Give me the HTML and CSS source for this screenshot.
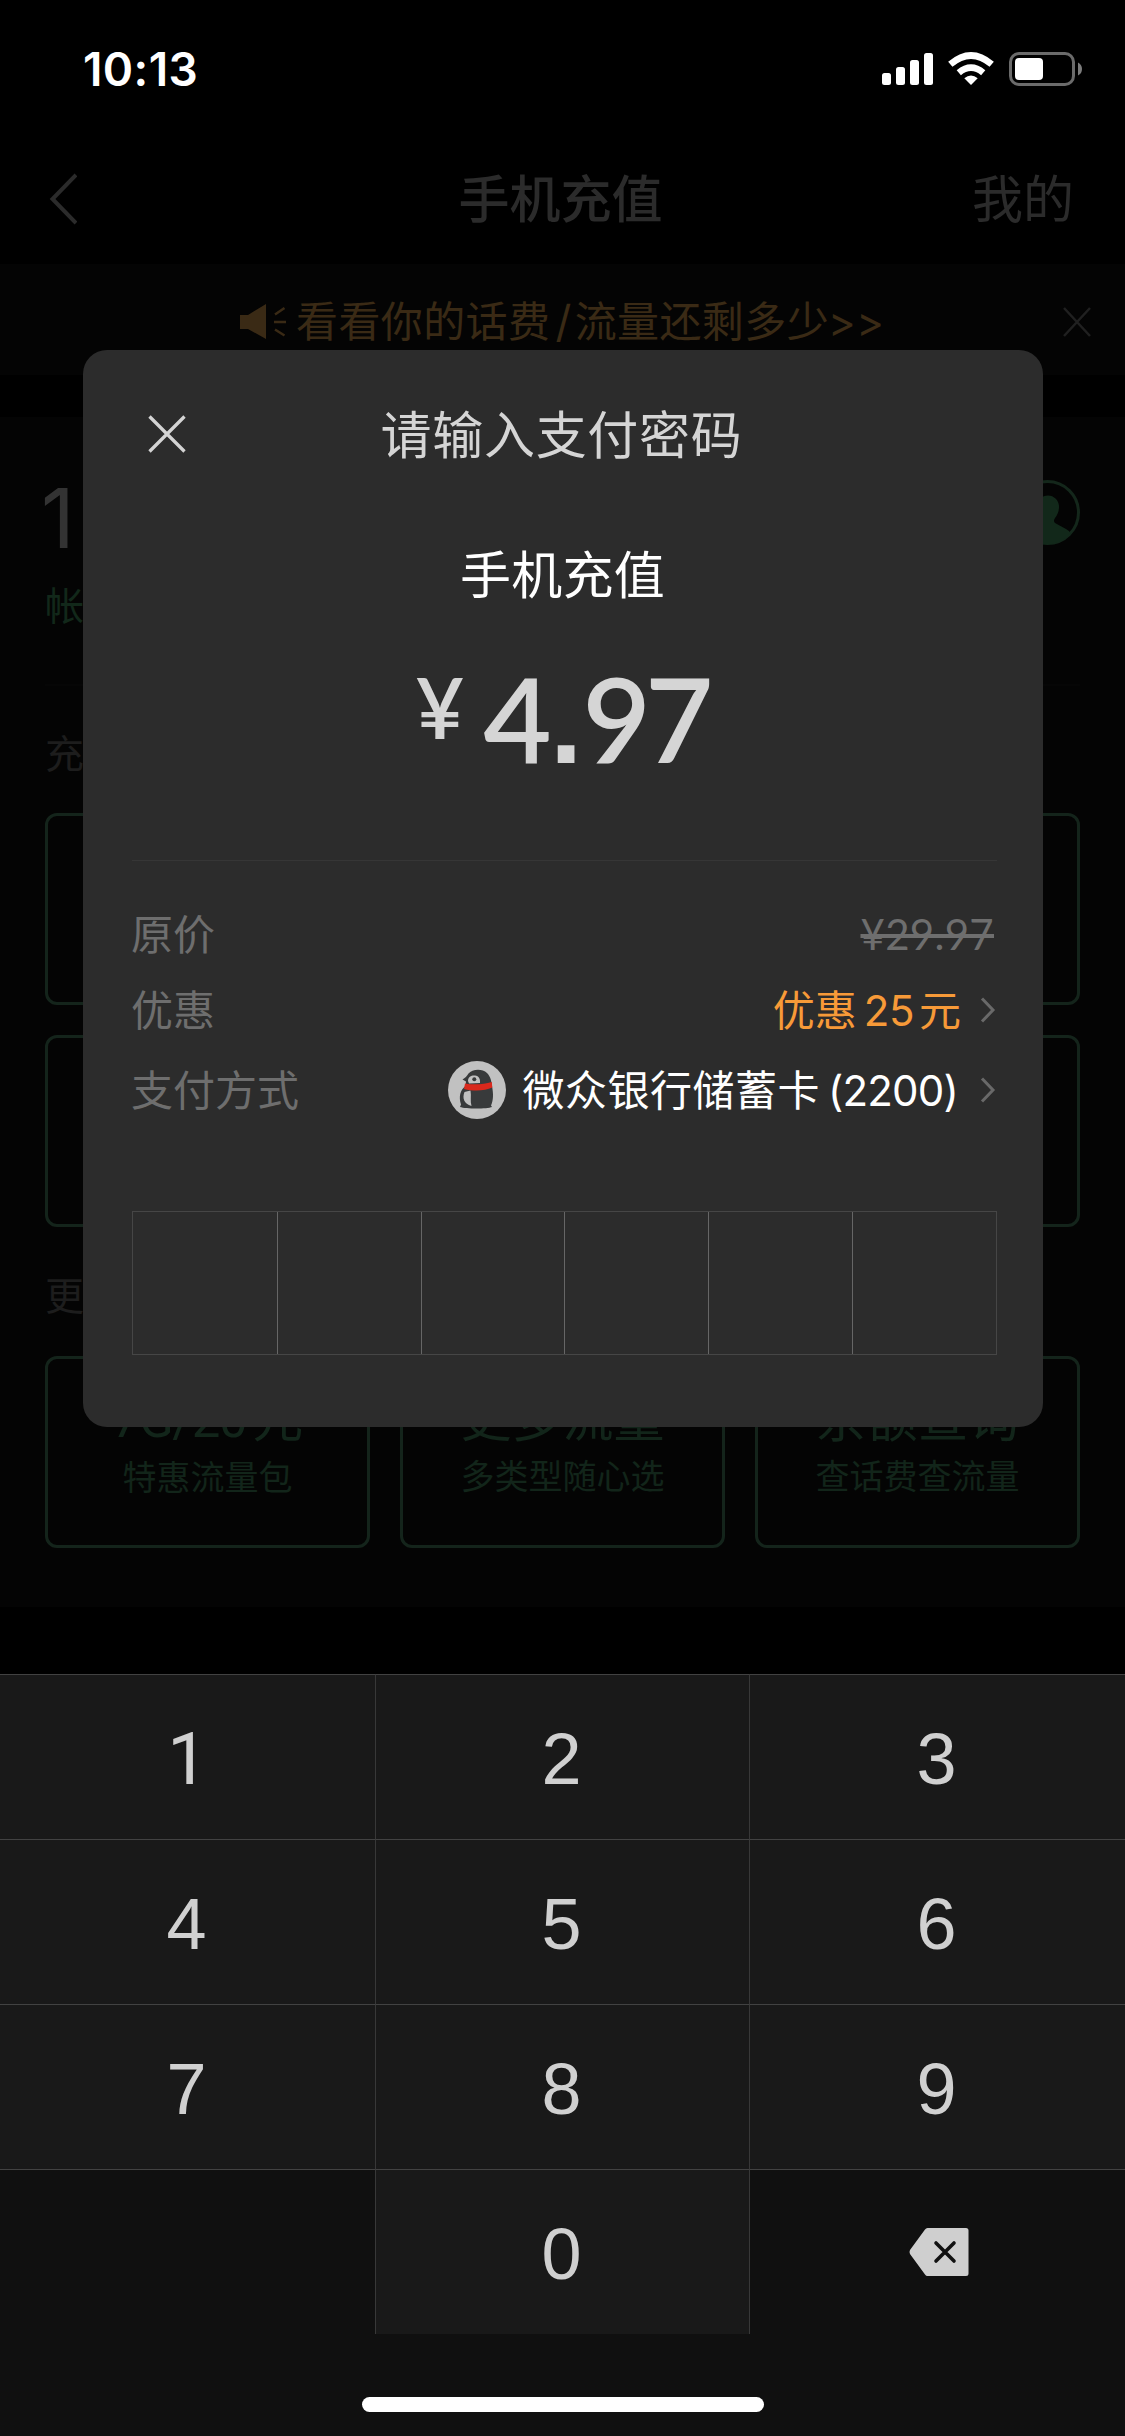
FILE: index.html
```html
<!DOCTYPE html>
<html lang="zh-CN">
<head>
<meta charset="utf-8">
<title>手机充值</title>
<link rel="stylesheet" href="styles.css">
</head>
<body>
<div class="phone">
  <main class="page">
    <div class="status-bar">
      <span class="time">10:13</span>
      <svg class="status-icons" width="204" height="34" viewBox="0 0 204 34">
        <g fill="#fff">
          <rect x="0" y="21" width="9" height="12" rx="2.5"/>
          <rect x="14" y="15" width="9" height="18" rx="2.5"/>
          <rect x="28" y="8" width="9" height="25" rx="2.5"/>
          <rect x="42" y="1" width="9" height="32" rx="2.5"/>
          <path d="M89 33 L82.300 26.300 Q89 20.500 95.700 26.300 Z"/>
        </g>
        <g fill="none" stroke="#fff" stroke-width="6.600">
          <path d="M68.300 12.300 Q89 -5.400 109.700 12.300"/>
          <path d="M76.800 20.700 Q89 10.500 101.200 20.700"/>
        </g>
        <rect x="128.500" y="1.500" width="63" height="31" rx="8.500" fill="none" stroke="#6b6b6b" stroke-width="3"/>
        <rect x="133" y="6" width="28" height="22" rx="4" fill="#fff"/>
        <path d="M196 10.500 Q200 12.500 200 17 Q200 21.500 196 23.500 Z" fill="#7c7c7c"/>
      </svg>
    </div>
    <header class="nav">
      <svg class="back" width="30" height="54" viewBox="0 0 30 54"><path d="M29 2 L5.500 26 L29 50" fill="none" stroke="#2b2b2b" stroke-width="4"/></svg>
      <h1 class="nav-title">手机充值</h1>
      <span class="nav-link">我的</span>
    </header>
    <div class="notice">
      <svg class="horn" width="46" height="36" viewBox="0 0 46 36"><path d="M0 11 H8 L26 0 V35 L8 25 H0 Z" fill="#3a2a15"/><path d="M35 10.500 L44.500 4 M34 18 H46 M35 25.500 L44.500 31.500" stroke="#3a2a15" stroke-width="2.500"/></svg>
      <span class="notice-text">看看你的话费<span class="slash">/</span>流量还剩多少<span class="more">&gt;&gt;</span></span>
      <svg class="notice-close" width="30" height="30" viewBox="0 0 30 30"><path d="M2 1 L28 29 M28 1 L2 29" stroke="#202020" stroke-width="2.500"/></svg>
    </div>
    <section class="recharge">
      <div class="account">
        <div class="account-main">
          <span class="number">1</span>
          <span class="owner">帐</span>
        </div>
        <svg class="avatar" width="65" height="65" viewBox="0 0 65 65"><circle cx="32.500" cy="32.500" r="31" fill="none" stroke="#14271b" stroke-width="3"/><path d="M9 54 Q10 51 15 49 L25 43 Q28 41 26 38 Q22 33 22 27 A11 11.500 0 0 1 44 27 Q44 33 40 38 Q38 41 40 43 L51 49 Q55 51 56 54 A32 32 0 0 1 9 54 Z" fill="#12281a"/></svg>
      </div>
      <div class="label label-first">充</div>
      <div class="grid">
        <div class="card"></div><div class="card"></div><div class="card"></div>
        <div class="card"></div><div class="card"></div><div class="card"></div>
      </div>
      <div class="label label-more">更</div>
      <div class="grid">
        <div class="card"><b class="card-title"><span class="plan">7G/20</span>元</b><span class="card-note">特惠流量包</span></div>
        <div class="card"><b class="card-title">更多流量</b><span class="card-note">多类型随心选</span></div>
        <div class="card"><b class="card-title">余额查询</b><span class="card-note">查话费查流量</span></div>
      </div>
    </section>
  </main>

  <section class="dialog">
    <div class="dialog-head">
      <svg class="close" width="38" height="38" viewBox="0 0 38 38"><path d="M1.500 1.500 L36.500 36.500 M36.500 1.500 L1.500 36.500" stroke="#d4d4d4" stroke-width="3.300"/></svg>
      <h2 class="dialog-title">请输入支付密码</h2>
    </div>
    <p class="merchant">手机充值</p>
    <p class="amount"><span class="yen">¥</span><span class="digits">4<span class="point">.</span>97</span></p>
    <div class="rows">
      <div class="row"><span class="name">原价</span><s class="old-price">¥29.97</s></div>
      <div class="row">
        <span class="name">优惠</span>
        <span class="value discount"><span class="name">优惠<span class="latin">25</span>元</span>
          <svg class="arrow" width="16" height="28" viewBox="0 0 16 28"><path d="M2 2.500 L13 14 L2 25.500" fill="none" stroke="#696969" stroke-width="3"/></svg>
        </span>
      </div>
      <div class="row">
        <span class="name">支付方式</span>
        <span class="value method">
          <svg class="bank" width="58" height="58" viewBox="0 0 58 58">
            <circle cx="29" cy="29" r="29" fill="#c1c1c1"/>
            <path d="M14.500 18.500 C17 17 19 15 20.500 12.500 C24 8 34 7 39 12 C43 16 43.500 21 44 25 C45.500 33 45.500 39 43 44.500 L44 46 C39 48 18 48 12 46 L13 43.500 C10.500 36 12 29 17.500 25 L18 20.500 Z" fill="#383a3b"/>
            <path d="M20 20 C20 15.500 24 14 27 14.500 C31 15 32.500 18 32 22 L21 22.500 Z" fill="#c1c1c1"/>
            <path d="M16.500 31 L22.500 29.500 C23.500 35 22 40 23.500 45 C16 43 14 37 16.500 31 Z" fill="#c1c1c1"/>
            <circle cx="26.300" cy="18.300" r="2" fill="#383a3b"/>
            <path d="M17 22.500 C25 24 36 23.500 43.800 21 L44.300 26.500 C37 30 26 30.500 16 28 Z" fill="#d9281c"/>
          </svg>
          <span class="name bank-name">微众银行储蓄卡<span class="tail">(2200)</span></span>
          <svg class="arrow" width="16" height="28" viewBox="0 0 16 28"><path d="M2 2.500 L13 14 L2 25.500" fill="none" stroke="#696969" stroke-width="3"/></svg>
        </span>
      </div>
    </div>
    <div class="pin"><i></i><i></i><i></i><i></i><i></i><i></i></div>
  </section>

  <footer class="keyboard">
    <div class="keys">
      <span class="key key-one">1</span><span class="key">2</span><span class="key">3</span>
      <span class="key">4</span><span class="key">5</span><span class="key">6</span>
      <span class="key">7</span><span class="key">8</span><span class="key">9</span>
      <span class="key blank"></span><span class="key">0</span>
      <span class="key blank"><svg class="delete" width="60" height="48" viewBox="0 0 60 48"><path d="M18.500 0 H57 Q59.500 0 59.500 2.500 V45.500 Q59.500 48 57 48 H18.500 Q17 48 16 46.500 L1 26 Q0 24 1 22 L16 1.500 Q17 0 18.500 0 Z" fill="#cfcfcf"/><path d="M27 15 L45 33 M45 15 L27 33" stroke="#111" stroke-width="3.600" stroke-linecap="round"/></svg></span>
    </div>
    <div class="home-bar"></div>
  </footer>
</div>
</body>
</html>
```
FILE: styles.css
```css
* { box-sizing: border-box; }

body {
  margin: 0;
  background: #000;
  font-family: Inter, "Noto Sans CJK SC", sans-serif;
}

h1, h2, p { margin: 0; font-weight: 400; }
svg { display: block; flex: none; }

.phone {
  position: relative;
  display: flex;
  flex-direction: column;
  width: 1125px;
  height: 2436px;
  overflow: hidden;
}

/* Dimmed page behind the dialog */
.page { height: 1674px; overflow: hidden; }

.status-bar {
  display: flex;
  justify-content: space-between;
  align-items: center;
  height: 138px;
  padding: 0 39px 0 83px;
}
.time { color: #fff; font-size: 46px; font-weight: 600; line-height: 50px; letter-spacing: 0.4px; }

.nav {
  display: grid;
  grid-template-columns: 1fr auto 1fr;
  align-items: center;
  height: 126px;
  padding: 0 51px 2px 47px;
  color: #2b2b2b;
  font-size: 51px;
  line-height: 60px;
}
.nav-title { font-size: 51px; font-weight: 500; }
.nav-link { justify-self: end; }

.notice {
  position: relative;
  display: flex;
  align-items: center;
  gap: 10px;
  height: 111px;
  padding: 4px 0 0 240px;
  background: #040404;
  color: #3a2a15;
  font-size: 42px;
}
.slash { margin: 0 3px 0 5px; font-size: 44px; }
.more { margin-left: -1px; }
.notice-text { margin-bottom: 1px; letter-spacing: 0.4px; line-height: 50px; }
.notice-close { margin-left: auto; margin-right: 33px; }

.recharge {
  height: 1190px;
  margin-top: 42px;
  padding: 63px 45px 0;
  background: #040404;
}
.account {
  display: flex;
  justify-content: space-between;
  height: 206px;
  border-bottom: 2px solid #060606;
}
.account-main { display: flex; flex-direction: column; }
.number { margin-left: -4px; color: #333; font-size: 83px; line-height: 76px; }
.owner { margin-top: 28px; color: #12281a; font-size: 39px; line-height: 44px; }
.label { color: #1d1d1d; font-size: 39px; line-height: 44px; }
.label-first { margin: 46px 0 37px; }
.label-more { margin: 47px 0 38px; }

.grid { display: grid; grid-template-columns: repeat(3, 325px); gap: 30px; }
.card {
  display: flex;
  flex-direction: column;
  align-items: center;
  height: 192px;
  padding-top: 30px;
  border: 3px solid #14241b;
  border-radius: 12px;
  color: #12251a;
}
.card-title { font-size: 51px; font-weight: 400; line-height: 60px; }
.plan { margin-right: 6px; font-family: Roboto, sans-serif; letter-spacing: -1.5px; }
.card-note { margin-top: 7px; font-size: 34px; line-height: 42px; }

/* Payment dialog */
.dialog {
  position: absolute;
  top: 350px;
  left: 83px;
  width: 960px;
  height: 1077px;
  padding: 0 46px 0 49px;
  border-radius: 24px;
  background: #2c2c2c;
}
.dialog-head {
  display: grid;
  grid-template-columns: 1fr auto 1fr;
  align-items: center;
  height: 168px;
  padding: 0 22px 0 16px;
}
.dialog-title { padding-top: 3px; color: #d5d5d5; font-size: 51px; letter-spacing: 0.7px; line-height: 60px; }
.merchant { color: #fff; font-size: 51px; line-height: 60px; letter-spacing: 0.3px; margin: 28px 4px 0 0; text-align: center; }
.amount {
  display: flex;
  justify-content: center;
  gap: 19px;
  margin-top: 52px;
  height: 203px;
  padding-right: 6px;
  border-bottom: 1px solid #363636;
  color: #d5d5d5;
  font-family: Lato, sans-serif;
  font-weight: 600;
}
.yen { padding-top: 7px; font-size: 84px; line-height: 84px; }
.digits { font-size: 118px; line-height: 119px; letter-spacing: -6px; }
.point { margin-left: 4px; font-family: "Liberation Sans", sans-serif; letter-spacing: 0; }

.rows { padding: 35px 1px 0 0; margin-left: -1px; }
.row {
  display: flex;
  justify-content: space-between;
  align-items: center;
  height: 76px;
  color: #6e6e6e;
  font-size: 42px;
}
.row:last-child { height: 84px; }
.name { padding-bottom: 5px; }
.old-price { margin-right: 2px; padding-bottom: 1px; font-family: Lato, sans-serif; font-size: 42px; letter-spacing: 0.3px; text-decoration-thickness: 4px; }
.value { display: flex; align-items: center; }
.discount { color: #f79a38; }
.latin { margin: 0 5px 0 7px; letter-spacing: -0.5px; }
.arrow { margin-left: 19px; }
.method { color: #fff; }
.bank-name { margin-left: 16px; letter-spacing: 0.5px; }
.bank-name + .arrow { margin-left: 22px; }
.tail { margin-left: 8px; letter-spacing: -0.8px; }

.pin {
  display: grid;
  grid-template-columns: repeat(6, 1fr);
  height: 144px;
  margin-top: 79px;
  border: 1px solid #464646;
}
.pin i + i { border-left: 1px solid #666; }

/* Numeric keyboard */
.keyboard { flex: 1; background: #101010; }
.keys { display: grid; grid-template-columns: 375px 375px 375px; grid-auto-rows: 165px; }
.key {
  display: flex;
  justify-content: center;
  align-items: center;
  border-top: 1px solid #424242;
  background: #191919;
  color: #d0d0d0;
  font-family: "Liberation Sans", sans-serif;
  font-size: 72px;
  padding: 4px 2px 0 0;
}
.key:nth-child(3n+2) { padding-right: 2px; border-left: 1px solid #383838; border-right: 1px solid #383838; }
.key-one { padding-right: 0; font-family: Roboto, sans-serif; }
.blank { background: #101010; padding: 0 0 0 3px; }
.home-bar { width: 402px; height: 15px; margin: 63px auto 0; border-radius: 8px; background: #fff; }
```
